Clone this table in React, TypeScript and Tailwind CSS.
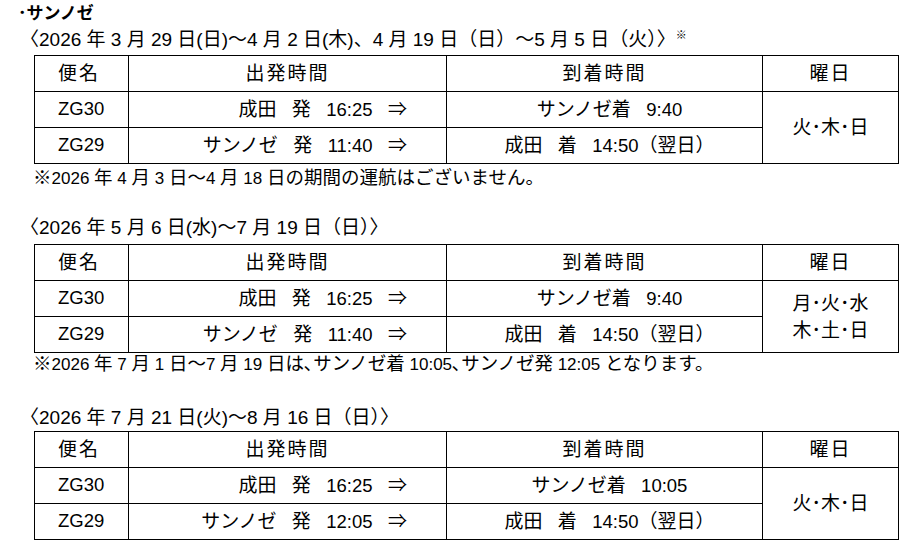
import React from 'react';

type Row = { flight: string; dep: string; arr: string };

interface Schedule {
  period: string;
  mark?: boolean;
  rows: Row[];
  days: string[];
  note?: string;
}

const schedules: Schedule[] = [
  {
    period: '〈2026 年 3 月 29 日(日)〜4 月 2 日(木)、4 月 19 日（日）〜5 月 5 日（火）〉',
    mark: true,
    rows: [
      { flight: 'ZG30', dep: '成田   発   16:25   ⇒', arr: 'サンノゼ着   9:40' },
      { flight: 'ZG29', dep: 'サンノゼ   発   11:40   ⇒', arr: '成田   着   14:50（翌日）' },
    ],
    days: ['火･木･日'],
    note: '※2026 年 4 月 3 日〜4 月 18 日の期間の運航はございません。',
  },
  {
    period: '〈2026 年 5 月 6 日(水)〜7 月 19 日（日）〉',
    rows: [
      { flight: 'ZG30', dep: '成田   発   16:25   ⇒', arr: 'サンノゼ着   9:40' },
      { flight: 'ZG29', dep: 'サンノゼ   発   11:40   ⇒', arr: '成田   着   14:50（翌日）' },
    ],
    days: ['月･火･水', '木･土･日'],
    note: '※2026 年 7 月 1 日〜7 月 19 日は､サンノゼ着 10:05､サンノゼ発 12:05 となります。',
  },
  {
    period: '〈2026 年 7 月 21 日(火)〜8 月 16 日（日）〉',
    rows: [
      { flight: 'ZG30', dep: '成田   発   16:25   ⇒', arr: 'サンノゼ着   10:05' },
      { flight: 'ZG29', dep: 'サンノゼ   発   12:05   ⇒', arr: '成田   着   14:50（翌日）' },
    ],
    days: ['火･木･日'],
  },
];

// latin runs are set a bit smaller than the japanese glyphs, like the source document
function Mixed({ text, latin }: { text: string; latin: string }) {
  const parts = text.split(/([\x20-\x7E]+)/).filter(Boolean);
  return (
    <>
      {parts.map((p, i) =>
        /^[\x20-\x7E]+$/.test(p) ? (
          <span key={i} className={latin}>
            {p}
          </span>
        ) : (
          <React.Fragment key={i}>{p}</React.Fragment>
        )
      )}
    </>
  );
}

function ScheduleTable({ s }: { s: Schedule }) {
  const cell = 'border border-black h-[36px] p-0 align-middle';
  const latin = 'text-[18.5px]';
  return (
    <table className="table-fixed border-collapse w-[864px] ml-[34px] text-[19px] leading-none">
      <colgroup>
        <col className="w-[94px]" />
        <col className="w-[318px]" />
        <col className="w-[316px]" />
        <col className="w-[136px]" />
      </colgroup>
      <tbody>
        <tr>
          <td className={`${cell} pl-[23px] tracking-[2px]`}>便名</td>
          <td className={`${cell} text-center tracking-[2px]`}>出発時間</td>
          <td className={`${cell} text-center tracking-[2px]`}>到着時間</td>
          <td className={`${cell} text-center tracking-[2px]`}>曜日</td>
        </tr>
        {s.rows.map((r, i) => (
          <tr key={r.flight}>
            <td className={`${cell} pl-[23px] ${latin}`}>{r.flight}</td>
            <td className={`${cell} text-right pr-[39px] whitespace-pre`}>
              <Mixed text={r.dep} latin={latin} />
            </td>
            <td className={`${cell} text-center pl-[10px] whitespace-pre`}>
              <Mixed text={r.arr} latin={latin} />
            </td>
            {i === 0 && (
              <td rowSpan={2} className={`${cell} text-center`}>
                {s.days.map((d) => (
                  <div key={d} className="leading-[27px]">
                    {d}
                  </div>
                ))}
              </td>
            )}
          </tr>
        ))}
      </tbody>
    </table>
  );
}

function Period({ s, className }: { s: Schedule; className: string }) {
  return (
    <div className={`h-[24px] leading-[24px] pl-[20px] text-[19px] whitespace-pre ${className}`}>
      {s.period}
      {s.mark && <sup className="text-[11px] -top-[7px]">※</sup>}
    </div>
  );
}

function Note({ text, className }: { text: string; className: string }) {
  return (
    <div className={`pl-[33px] text-[18.5px] whitespace-pre ${className}`}>
      <Mixed text={text} latin="text-[17px]" />
    </div>
  );
}

export default function App() {
  const [first, second, third] = schedules;
  return (
    <div
      className="w-[906px] h-[542px] bg-white text-black overflow-hidden"
      style={{ fontFamily: '"Liberation Sans", "Noto Sans CJK JP", sans-serif' }}
    >
      <div className="h-[28px] leading-[28px] pl-[18px] text-[17px] font-bold">･サンノゼ</div>

      {/* section 1 */}
      <Period s={first} className="" />
      <div className="mt-[3px]">
        <ScheduleTable s={first} />
      </div>
      <Note text={first.note!} className="h-[28px] leading-[28px]" />

      {/* section 2 */}
      <Period s={second} className="mt-[24px]" />
      <div className="mt-[4px]">
        <ScheduleTable s={second} />
      </div>
      <Note text={second.note!} className="h-[22px] leading-[22px]" />

      {/* section 3 */}
      <Period s={third} className="mt-[31px]" />
      <div className="mt-[1px]">
        <ScheduleTable s={third} />
      </div>
    </div>
  );
}
